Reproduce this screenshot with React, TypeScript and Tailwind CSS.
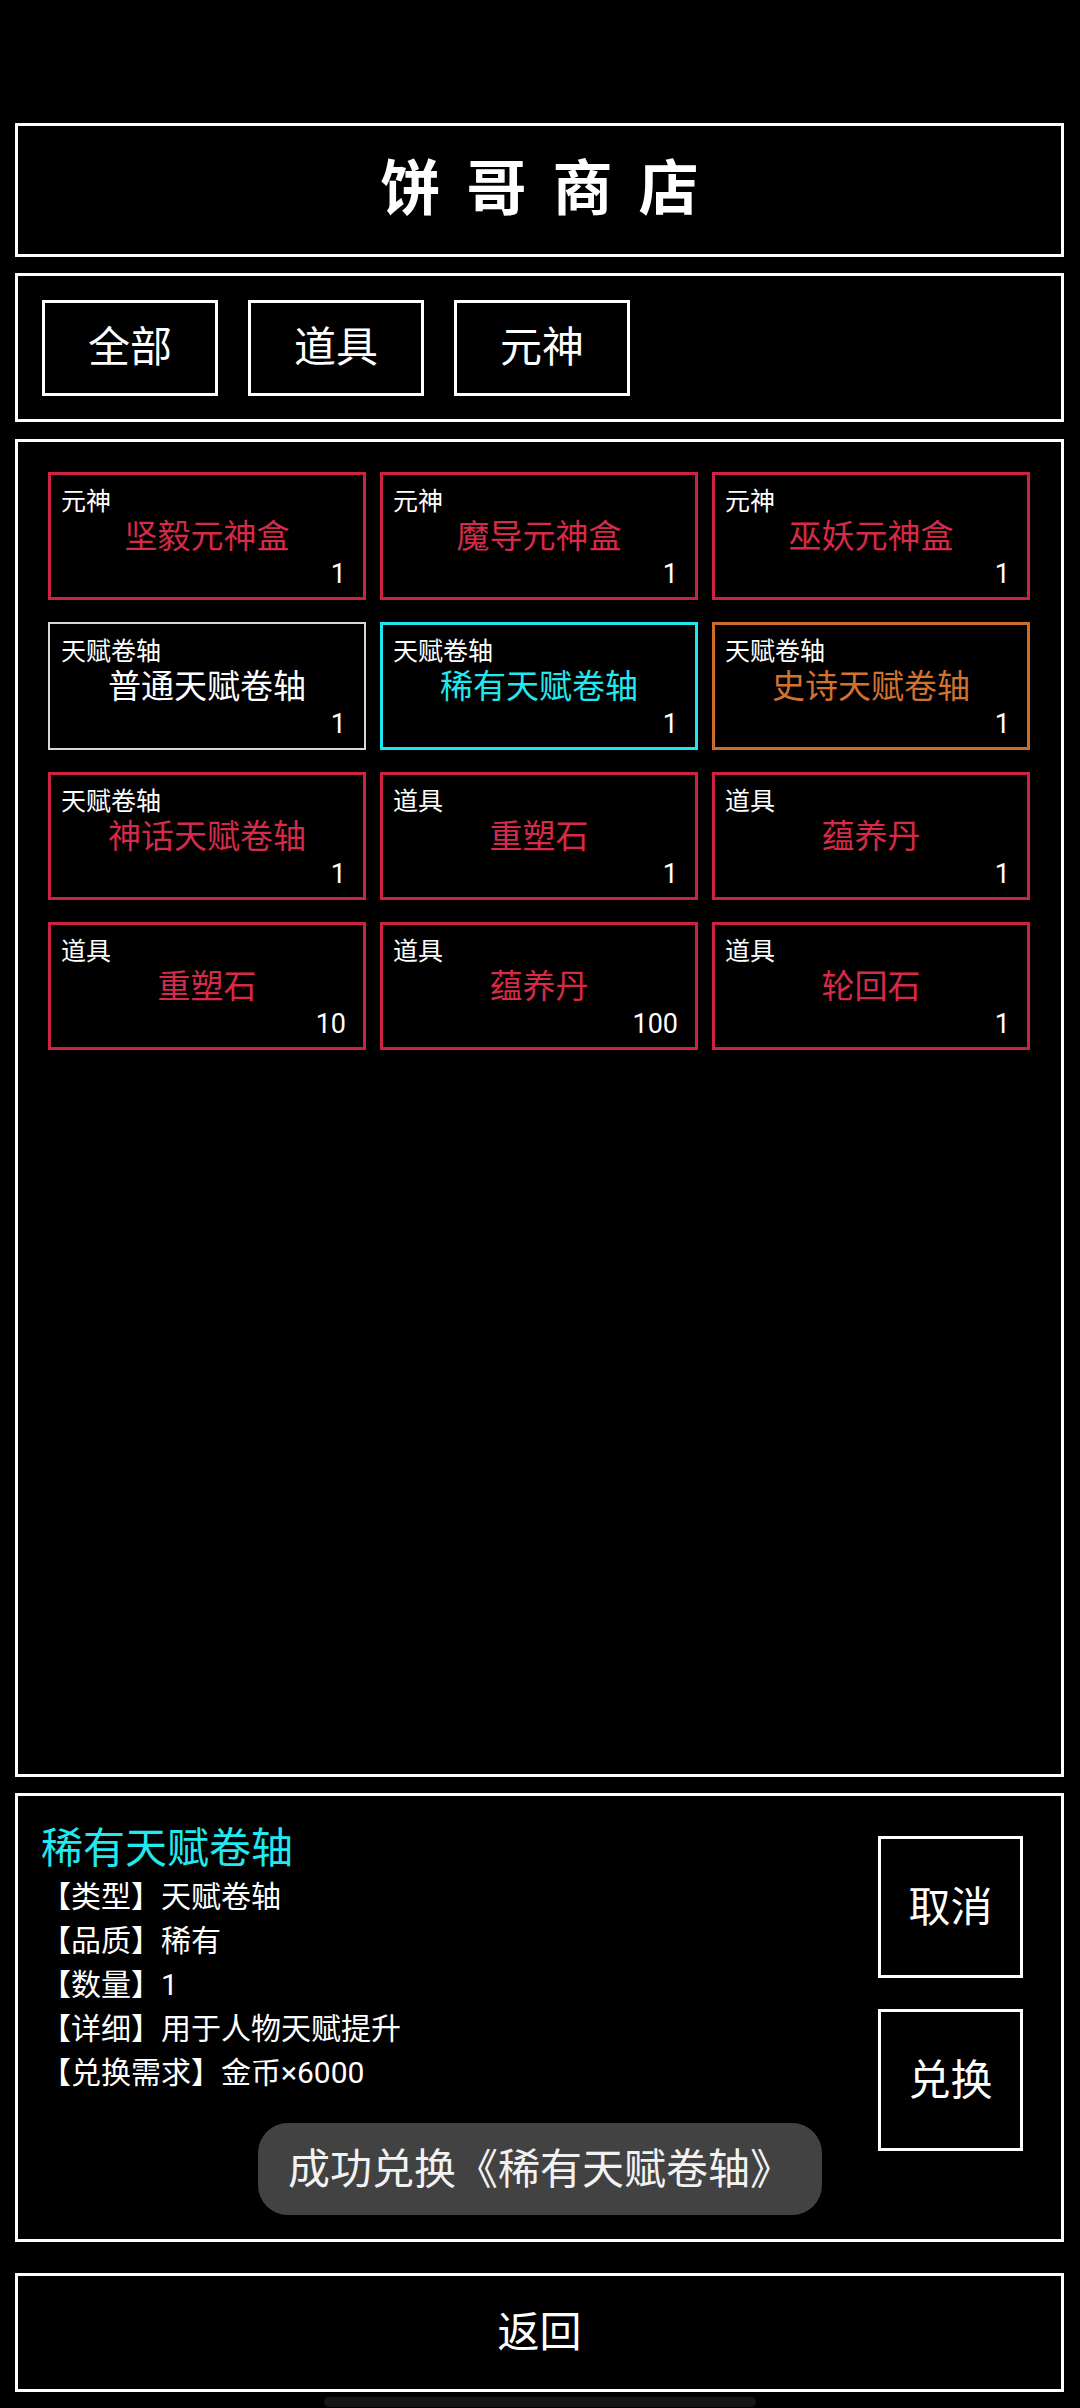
import React from 'react';

type Tone = 'red' | 'white' | 'cyan' | 'orange';

interface ShopItem {
  category: string;
  name: string;
  count: number;
  tone: Tone;
}

const items: ShopItem[] = [
  { category: '元神', name: '坚毅元神盒', count: 1, tone: 'red' },
  { category: '元神', name: '魔导元神盒', count: 1, tone: 'red' },
  { category: '元神', name: '巫妖元神盒', count: 1, tone: 'red' },
  { category: '天赋卷轴', name: '普通天赋卷轴', count: 1, tone: 'white' },
  { category: '天赋卷轴', name: '稀有天赋卷轴', count: 1, tone: 'cyan' },
  { category: '天赋卷轴', name: '史诗天赋卷轴', count: 1, tone: 'orange' },
  { category: '天赋卷轴', name: '神话天赋卷轴', count: 1, tone: 'red' },
  { category: '道具', name: '重塑石', count: 1, tone: 'red' },
  { category: '道具', name: '蕴养丹', count: 1, tone: 'red' },
  { category: '道具', name: '重塑石', count: 10, tone: 'red' },
  { category: '道具', name: '蕴养丹', count: 100, tone: 'red' },
  { category: '道具', name: '轮回石', count: 1, tone: 'red' },
];

const toneBox: Record<Tone, string> = {
  red: 'border-[3px] border-[#cc2343]',
  white: 'border-2 border-[#d8d8d8] p-px',
  cyan: 'border-[3px] border-[#1fe6ee]',
  orange: 'border-[3px] border-[#cc6d2c]',
};

const toneText: Record<Tone, string> = {
  red: 'text-[#d52a48]',
  white: 'text-white',
  cyan: 'text-[#22e8ef]',
  orange: 'text-[#d27230]',
};

const tabs = ['全部', '道具', '元神'];

const details = [
  '【类型】天赋卷轴',
  '【品质】稀有',
  '【数量】1',
  '【详细】用于人物天赋提升',
  '【兑换需求】金币×6000',
];

const ItemCard: React.FC<{ item: ShopItem }> = ({ item }) => (
  <div className={`h-[128px] flex flex-col ${toneBox[item.tone]}`}>
    <div className="pt-[12px] pl-[10px] text-[25px] leading-[30px] text-white">{item.category}</div>
    <div className={`text-center text-[33px] leading-[40px] ${toneText[item.tone]}`}>{item.name}</div>
    <div className="pt-[2px] pr-[17px] text-right text-[27px] leading-[30px] text-white">{item.count}</div>
  </div>
);

export default function App() {
  return (
    <div
      className="w-[1080px] h-[2408px] bg-black text-white pl-[15px] pr-[16px] pt-[123px] flex flex-col"
      style={{ fontFamily: 'Roboto, "Noto Sans CJK SC", sans-serif' }}
    >
      {/* title */}
      <div className="h-[134px] border-[3px] border-white flex items-center justify-center">
        <span className="text-[60px] font-bold tracking-[26px] pl-[26px] leading-none">饼哥商店</span>
      </div>

      {/* tabs */}
      <div className="mt-[16px] h-[149px] border-[3px] border-white flex items-center gap-[30px] px-[24px]">
        {tabs.map(t => (
          <button key={t} className="w-[176px] h-[96px] border-[3px] border-white flex items-center justify-center text-[42px]">
            {t}
          </button>
        ))}
      </div>

      {/* item grid */}
      <div className="mt-[17px] h-[1338px] border-[3px] border-white pt-[30px] pl-[30px] pr-[31px]">
        <div className="grid grid-cols-3 gap-x-[14px] gap-y-[22px]">
          {items.map((it, i) => <ItemCard key={i} item={it} />)}
        </div>
      </div>

      {/* detail */}
      <div className="relative mt-[16px] h-[449px] border-[3px] border-white flex">
        <div className="flex-1 pl-[23px] pt-[27px]">
          <div className="text-[42px] leading-[52px] text-[#22e8ef]">稀有天赋卷轴</div>
          {details.map(d => (
            <div key={d} className="text-[30px] leading-[44px]">{d}</div>
          ))}
        </div>
        <div className="flex flex-col gap-[31px] pt-[40px] pr-[38px]">
          <button className="w-[145px] h-[142px] border-[3px] border-white flex items-center justify-center text-[42px]">取消</button>
          <button className="w-[145px] h-[142px] border-[3px] border-white flex items-center justify-center text-[42px]">兑换</button>
        </div>
        <div className="absolute left-[240px] top-[327px] w-[564px] h-[92px] rounded-[30px] bg-[#424242] flex items-center justify-center text-[42px] text-[#f2f2f2]">
          成功兑换《稀有天赋卷轴》
        </div>
      </div>

      {/* back */}
      <div className="mt-[31px] h-[119px] border-[3px] border-white flex items-center justify-center text-[42px]">返回</div>

      <div className="mt-[5px] mx-auto w-[432px] h-[10px] rounded-[5px] bg-[#161616]" />
    </div>
  );
}
